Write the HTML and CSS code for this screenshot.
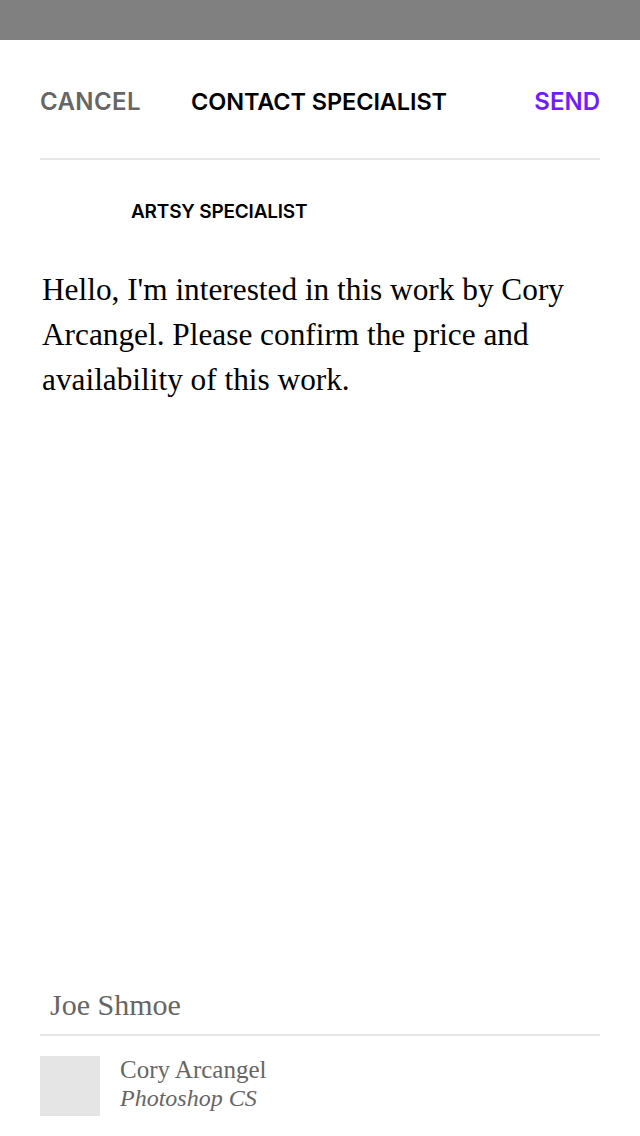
FILE: index.html
```html
<!DOCTYPE html>
<html>
<head>
<meta charset="utf-8">
<link rel="stylesheet" href="styles.css">
</head>
<body>
<div class="status"></div>
<div class="page">
  <header class="nav">
    <span class="cancel">CANCEL</span>
    <span class="title">CONTACT SPECIALIST</span>
    <span class="send">SEND</span>
  </header>
  <div class="recipient">ARTSY SPECIALIST</div>
  <p class="message">Hello, I'm interested in this work by Cory Arcangel. Please confirm the price and availability of this work.</p>
  <div class="spacer"></div>
  <div class="name">Joe Shmoe</div>
  <div class="artwork">
    <div class="thumb"></div>
    <div class="info">
      <div class="artist">Cory Arcangel</div>
      <div class="work">Photoshop CS</div>
    </div>
  </div>
</div>
</body>
</html>
```
FILE: styles.css
```css
html, body {
  margin: 0;
  padding: 0;
  background: #fff;
}
body {
  width: 640px;
  height: 1136px;
  overflow: hidden;
}
.status {
  height: 40px;
  background: #808080;
}
.page {
  height: 1096px;
  padding: 0 40px;
  display: flex;
  flex-direction: column;
}
.nav {
  display: flex;
  align-items: center;
  height: 120px;
  padding-top: 4px;
  box-sizing: border-box;
  border-bottom: 2px solid #e5e5e5;
  font-family: "Inter", "DejaVu Sans", sans-serif;
  font-weight: 600;
  font-size: 24px;
}
.cancel {
  color: #666;
  width: 151px;
  letter-spacing: 0.4px;
}
.title {
  color: #000;
  flex: 1;
  font-size: 23.5px;
  letter-spacing: -0.1px;
}
.send {
  color: #6e1eff;
}
.recipient {
  font-family: "Inter", "DejaVu Sans", sans-serif;
  font-weight: 600;
  font-size: 19px;
  letter-spacing: -0.2px;
  padding: 40px 0 0 91px;
  color: #000;
}
.message {
  margin: 44px 0 0 2px;
  font-family: "Liberation Serif", serif;
  font-size: 31.3px;
  line-height: 45px;
  color: #000;
}
.spacer {
  flex: 1;
}
.name {
  font-family: "Liberation Serif", serif;
  font-size: 30px;
  color: #666;
  padding: 0 0 12px 10px;
  border-bottom: 2px solid #e5e5e5;
}
.artwork {
  display: flex;
  gap: 20px;
  padding: 20px 0 20px;
}
.thumb {
  width: 60px;
  height: 60px;
  background: #e5e5e5;
}
.info {
  font-family: "Liberation Serif", serif;
  font-size: 25px;
  line-height: 28px;
  color: #666;
}
.work {
  font-style: italic;
  font-size: 24px;
}
```
